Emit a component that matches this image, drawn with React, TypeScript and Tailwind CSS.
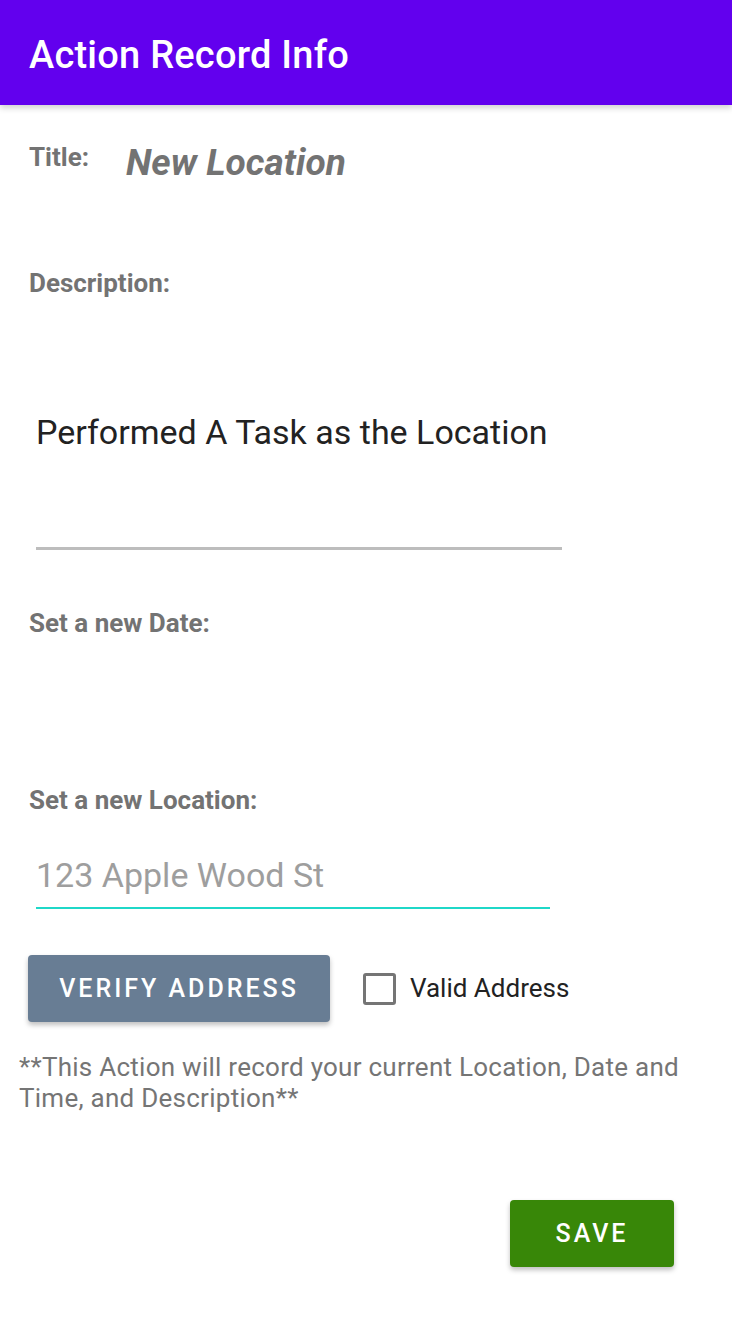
export default function App() {
    return (
        <div className="min-h-[1334px] w-[732px] bg-white font-['Roboto',sans-serif]">
            <header className="flex h-[105px] items-center bg-[#6200ee] px-[29px] pt-[5px] shadow-[0_3px_6px_rgba(0,0,0,0.18)]">
                <h1 className="text-[38px] font-medium leading-[44px] tracking-[0.006em] text-white">Action Record Info</h1>
            </header>

            <main className="flex flex-col">
                <div className="flex items-start pl-[29px] pt-[38px]">
                    <span className="w-[97px] text-[26px] font-bold leading-[28px] text-[#737373]">Title:</span>
                    <span className="text-[37px] font-bold italic leading-[40px] text-[#737373]">New Location</span>
                </div>

                <div className="pl-[29px] pt-[86px] text-[26px] font-bold leading-[28px] text-[#737373]">Description:</div>

                <div className="ml-[36px] mt-[116px] w-[526px] border-b-[3px] border-[#bdbdbd] pb-[96px] text-[34px] leading-[38px] text-[#222]">
                    Performed A Task as the Location
                </div>

                <div className="pl-[29px] pt-[59px] text-[26px] font-bold leading-[28px] text-[#737373]">Set a new Date:</div>

                <div className="pl-[29px] pt-[149px] text-[26px] font-bold leading-[28px] text-[#737373]">Set a new Location:</div>

                <div className="ml-[36px] mt-[42px] w-[514px] border-b-[2px] border-[#1fd8c8] pb-[13px] text-[34px] leading-[38px] text-[#9e9e9e]">
                    123 Apple Wood St
                </div>

                <div className="flex items-center pl-[28px] pt-[46px]">
                    <button className="flex h-[67px] w-[302px] items-center justify-center rounded-[4px] bg-[#687d94] text-[25px] font-medium tracking-[0.12em] text-white shadow-[0_3px_5px_rgba(0,0,0,0.25)]">
                        VERIFY ADDRESS
                    </button>
                    <div className="ml-[33px] flex items-center">
                        <span className="h-[32px] w-[33px] rounded-[3px] border-[3px] border-[#757575]" />
                        <span className="ml-[14px] text-[26px] text-[#222]">Valid Address</span>
                    </div>
                </div>

                <p className="px-[19px] pt-[30px] text-[26px] leading-[31px] tracking-[0.01em] text-[#757575]">
                    **This Action will record your current Location, Date and Time, and Description**
                </p>

                <div className="flex justify-end pr-[58px] pt-[86px]">
                    <button className="flex h-[67px] w-[164px] items-center justify-center rounded-[4px] bg-[#388708] text-[25px] font-medium tracking-[0.12em] text-white shadow-[0_3px_5px_rgba(0,0,0,0.25)]">
                        SAVE
                    </button>
                </div>
            </main>
        </div>
    );
}
